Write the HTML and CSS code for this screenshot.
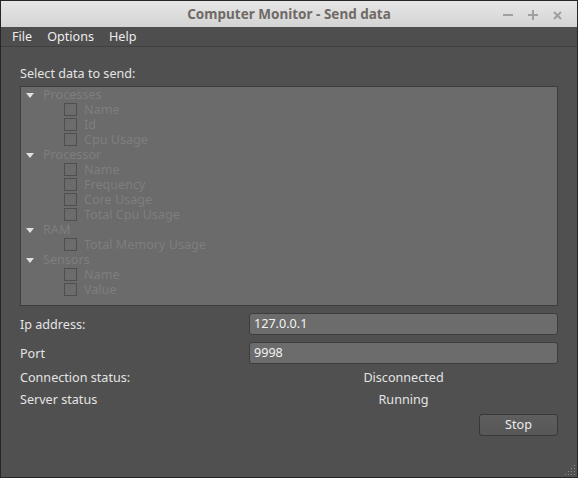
FILE: index.html
```html
<!DOCTYPE html>
<html>
<head>
<meta charset="utf-8">
<link rel="stylesheet" href="styles.css">
</head>
<body>
<div class="window">
  <div class="titlebar">
    <div class="title">Computer Monitor - Send data</div>
    <div class="controls">
      <svg class="ctl" width="10" height="10" viewBox="0 0 10 10"><rect x="0" y="4" width="10" height="2" fill="#a0a0a0"/></svg>
      <svg class="ctl" width="10" height="10" viewBox="0 0 10 10"><rect x="0" y="4" width="10" height="2" fill="#a0a0a0"/><rect x="4" y="0" width="2" height="10" fill="#a0a0a0"/></svg>
      <svg class="ctl" width="9" height="9" viewBox="0 0 9 9"><path d="M1 1 L8 8 M8 1 L1 8" stroke="#a0a0a0" stroke-width="2"/></svg>
    </div>
  </div>
  <div class="menubar">
    <span class="menu">File</span>
    <span class="menu">Options</span>
    <span class="menu">Help</span>
  </div>
  <div class="content">
    <div class="section-label">Select data to send:</div>
    <div class="tree">
      <div class="cat"><span class="arrow"></span><span class="txt">Processes</span></div>
      <div class="item"><span class="cb"></span><span class="txt">Name</span></div>
      <div class="item"><span class="cb"></span><span class="txt">Id</span></div>
      <div class="item"><span class="cb"></span><span class="txt">Cpu Usage</span></div>
      <div class="cat"><span class="arrow"></span><span class="txt">Processor</span></div>
      <div class="item"><span class="cb"></span><span class="txt">Name</span></div>
      <div class="item"><span class="cb"></span><span class="txt">Frequency</span></div>
      <div class="item"><span class="cb"></span><span class="txt">Core Usage</span></div>
      <div class="item"><span class="cb"></span><span class="txt">Total Cpu Usage</span></div>
      <div class="cat"><span class="arrow"></span><span class="txt">RAM</span></div>
      <div class="item"><span class="cb"></span><span class="txt">Total Memory Usage</span></div>
      <div class="cat"><span class="arrow"></span><span class="txt">Sensors</span></div>
      <div class="item"><span class="cb"></span><span class="txt">Name</span></div>
      <div class="item"><span class="cb"></span><span class="txt">Value</span></div>
    </div>
    <div class="form">
      <div class="lbl">Ip address:</div>
      <div class="input">127.0.0.1</div>
      <div class="lbl">Port</div>
      <div class="input">9998</div>
    </div>
    <div class="status">
      <div class="lbl">Connection status:</div>
      <div class="val">Disconnected</div>
      <div class="lbl">Server status</div>
      <div class="val">Running</div>
    </div>
    <div class="actions">
      <div class="button">Stop</div>
    </div>
  </div>
  <svg class="grip" width="12" height="12" viewBox="0 0 12 12">
    <g fill="#8c8c8c">
      <rect x="10" y="1" width="1" height="1"/>
      <rect x="7" y="4" width="1" height="1"/><rect x="10" y="4" width="1" height="1"/>
      <rect x="4" y="7" width="1" height="1"/><rect x="7" y="7" width="1" height="1"/><rect x="10" y="7" width="1" height="1"/>
      <rect x="1" y="10" width="1" height="1"/><rect x="4" y="10" width="1" height="1"/><rect x="7" y="10" width="1" height="1"/><rect x="10" y="10" width="1" height="1"/>
    </g>
  </svg>
</div>
</body>
</html>
```
FILE: styles.css
```css
* { box-sizing: border-box; }
html, body { margin: 0; padding: 0; background: #000; }
body { font-family: "Noto Sans", "DejaVu Sans", sans-serif; font-size: 12.6px; }

.window {
  width: 578px;
  height: 478px;
  border: 1px solid #262626;
  background: #505050;
  position: relative;
  display: flex;
  flex-direction: column;
}

.titlebar {
  height: 26px;
  background: linear-gradient(#e6e6e6, #d4d4d4);
  position: relative;
  display: flex;
  align-items: center;
  justify-content: center;
  flex-shrink: 0;
}
.title {
  font-weight: bold;
  font-size: 13.5px;
  color: #6f6a66;
}
.controls {
  position: absolute;
  right: 15px;
  top: 9px;
  display: flex;
  gap: 15px;
  align-items: center;
}
.ctl { display: block; }

.menubar {
  height: 20px;
  background: #4e4e4e;
  border-bottom: 1px solid #404040;
  display: flex;
  align-items: center;
  padding-left: 11px;
  gap: 15px;
  color: #ececec;
  flex-shrink: 0;
}

.content {
  padding: 15px 19px 0 19px;
  display: flex;
  flex-direction: column;
  color: #e4e4e4;
}
.section-label { height: 24px; line-height: 24px; }

.tree {
  height: 220px;
  background: #6b6b6b;
  border: 1px solid #3c3c3c;
  color: #7e7e7e;
}
.cat, .item {
  height: 15px;
  display: flex;
  align-items: center;
  white-space: nowrap;
}
.txt { line-height: 15px; height: 15px; }
.cat { padding-left: 5px; }
.arrow {
  width: 0; height: 0;
  border-left: 4.5px solid transparent;
  border-right: 4.5px solid transparent;
  border-top: 5px solid #e0e0e0;
  margin-right: 9px;
  margin-top: 1px;
}
.item { padding-left: 43px; }
.cb {
  width: 13px; height: 13px;
  border: 1px solid #4f4f4f;
  margin-right: 7px;
  position: relative;
  background: #6b6b6b;
}
.cb::after {
  content: "";
  position: absolute;
  left: 3px; top: 1px;
  width: 4px; height: 7px;
  border-right: 1.5px solid #717171;
  border-bottom: 1.5px solid #717171;
  transform: rotate(40deg);
}

.form {
  display: grid;
  grid-template-columns: 229px 1fr;
  row-gap: 7px;
  margin-top: 7px;
  align-items: center;
}
.lbl { color: #e4e4e4; }
.input {
  height: 22px;
  background: #6c6c6c;
  border: 1px solid #3d3d3d;
  border-radius: 3px;
  padding-left: 4px;
  line-height: 20px;
  color: #f2f2f2;
}

.status {
  display: grid;
  grid-template-columns: 229px 1fr;
  grid-template-rows: 21px 21px;
  row-gap: 0;
  margin-top: 3px;
  align-items: center;
}
.status .lbl:nth-of-type(3), .status .val:nth-of-type(4) { margin-top: 1px; }
.val { text-align: center; }

.actions {
  display: flex;
  justify-content: flex-end;
  margin-top: 5px;
}
.button {
  width: 79px;
  height: 22px;
  border: 1px solid #383838;
  border-radius: 3px;
  background: linear-gradient(#5e5e5e, #575757);
  text-align: center;
  line-height: 20px;
  color: #ececec;
}

.grip { position: absolute; right: 1px; bottom: 1px; }
```
